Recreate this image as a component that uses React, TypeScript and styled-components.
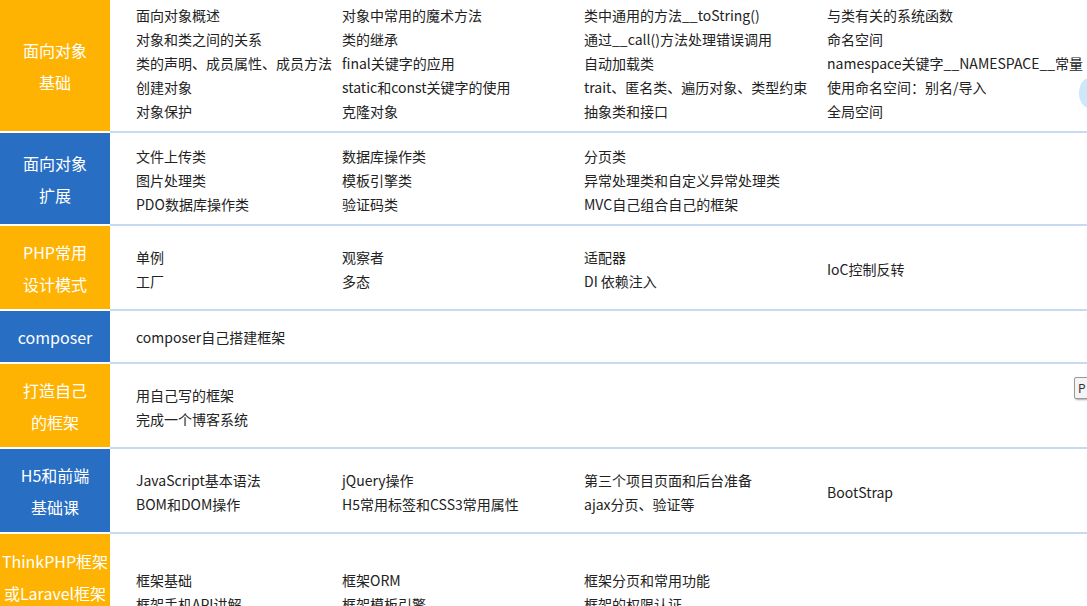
import styled, { createGlobalStyle } from "styled-components";

const GlobalStyle = createGlobalStyle`
  html, body { margin: 0; padding: 0; background: #fff; overflow: hidden; }
  body { font-family: "Noto Sans CJK SC", "Liberation Sans", sans-serif; }
`;

const Page = styled.div`
  position: relative;
  width: 1087px;
  height: 606px;
  overflow: hidden;
`;

const Row = styled.div`
  display: flex;
`;

const Label = styled.div<{ $tone: "orange" | "blue"; $top?: boolean }>`
  flex: 0 0 110px;
  width: 110px;
  display: flex;
  flex-direction: column;
  align-items: center;
  justify-content: ${(p) => (p.$top ? "flex-start" : "center")};
  background: ${(p) => (p.$tone === "orange" ? "#feb302" : "#286ec3")};
  color: #fff;
  font-size: 16px;
  line-height: 32px;
  padding: ${(p) => (p.$top ? "11px 0 9px" : "10px 0 9px")};
  border-bottom: 2px solid #fff;
  white-space: nowrap;
  overflow: hidden;
`;

const Content = styled.div<{ $pt: number; $pb: number }>`
  flex: 1;
  display: grid;
  grid-template-columns: 206px 242px 243px 1fr;
  padding: ${(p) => p.$pt}px 0 ${(p) => p.$pb}px 26px;
  border-bottom: 2px solid #c6daf0;
`;

const Column = styled.div`
  display: flex;
  flex-direction: column;
  justify-content: center;
`;

const Item = styled.div`
  font-size: 14px;
  line-height: 24px;
  color: #222;
  white-space: nowrap;
`;

const Bubble = styled.div`
  position: absolute;
  right: -12px;
  top: 78px;
  width: 20px;
  height: 30px;
  border-radius: 50%;
  background: #cde8fb;
`;

const Tip = styled.div`
  position: absolute;
  left: 1074px;
  top: 377px;
  width: 20px;
  height: 20px;
  border: 1px solid #999;
  border-radius: 2px;
  background: #f4f4f4;
  font-size: 12px;
  line-height: 20px;
  padding-left: 3px;
  color: #333;
  box-shadow: 1px 1px 2px #aaa;
`;

type Section = {
  label: string[];
  tone: "orange" | "blue";
  pt: number;
  pb: number;
  top?: boolean;
  cols: string[][];
};

const sections: Section[] = [
  {
    label: ["面向对象", "基础"],
    tone: "orange",
    pt: 3,
    pb: 8,
    cols: [
      ["面向对象概述", "对象和类之间的关系", "类的声明、成员属性、成员方法", "创建对象", "对象保护"],
      ["对象中常用的魔术方法", "类的继承", "final关键字的应用", "static和const关键字的使用", "克隆对象"],
      ["类中通用的方法__toString()", "通过__call()方法处理错误调用", "自动加载类", "trait、匿名类、遍历对象、类型约束", "抽象类和接口"],
      ["与类有关的系统函数", "命名空间", "namespace关键字__NAMESPACE__常量", "使用命名空间：别名/导入", "全局空间"],
    ],
  },
  {
    label: ["面向对象", "扩展"],
    tone: "blue",
    pt: 11,
    pb: 8,
    cols: [
      ["文件上传类", "图片处理类", "PDO数据库操作类"],
      ["数据库操作类", "模板引擎类", "验证码类"],
      ["分页类", "异常处理类和自定义异常处理类", "MVC自己组合自己的框架"],
      [],
    ],
  },
  {
    label: ["PHP常用", "设计模式"],
    tone: "orange",
    pt: 19,
    pb: 16,
    cols: [["单例", "工厂"], ["观察者", "多态"], ["适配器", "DI 依赖注入"], ["IoC控制反转"]],
  },
  {
    label: ["composer"],
    tone: "blue",
    pt: 14,
    pb: 13,
    cols: [["composer自己搭建框架"], [], [], []],
  },
  {
    label: ["打造自己", "的框架"],
    tone: "orange",
    pt: 19,
    pb: 16,
    cols: [["用自己写的框架", "完成一个博客系统"], [], [], []],
  },
  {
    label: ["H5和前端", "基础课"],
    tone: "blue",
    pt: 19,
    pb: 16,
    cols: [
      ["JavaScript基本语法", "BOM和DOM操作"],
      ["jQuery操作", "H5常用标签和CSS3常用属性"],
      ["第三个项目页面和后台准备", "ajax分页、验证等"],
      ["BootStrap"],
    ],
  },
  {
    label: ["ThinkPHP框架", "或Laravel框架"],
    tone: "orange",
    pt: 34,
    pb: 20,
    top: true,
    cols: [
      ["框架基础", "框架手机API讲解", "框架综合项目"],
      ["框架ORM", "框架模板引擎", "框架缓存"],
      ["框架分页和常用功能", "框架的权限认证", "框架部署上线"],
      [],
    ],
  },
];

export default function App() {
  return (
    <Page>
      <GlobalStyle />
      {sections.map((s) => (
        <Row key={s.label.join("")}>
          <Label $tone={s.tone} $top={s.top}>
            {s.label.map((l) => (
              <span key={l}>{l}</span>
            ))}
          </Label>
          <Content $pt={s.pt} $pb={s.pb}>
            {s.cols.map((col, i) => (
              <Column key={i}>
                {col.map((t) => (
                  <Item key={t}>{t}</Item>
                ))}
              </Column>
            ))}
          </Content>
        </Row>
      ))}
      <Bubble />
      <Tip>P</Tip>
    </Page>
  );
}
